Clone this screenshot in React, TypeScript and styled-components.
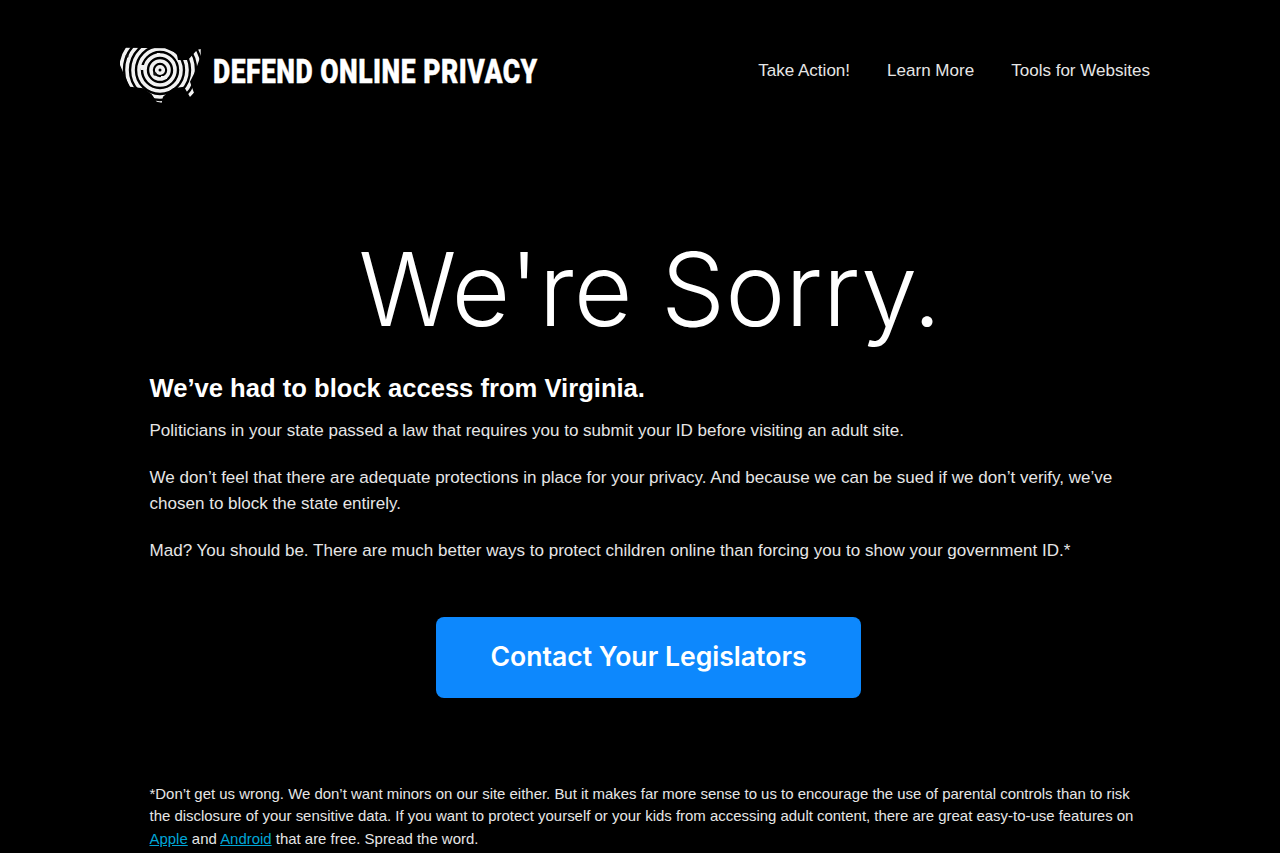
import styled, { createGlobalStyle } from 'styled-components'

const GlobalStyle = createGlobalStyle`
  html, body {
    margin: 0;
    padding: 0;
    background: #000;
    color: #fff;
    font-family: "Liberation Sans", Arial, sans-serif;
  }
`

const Page = styled.div`
  width: 1280px;
  margin: 0 auto;
`

const Header = styled.header`
  display: flex;
  align-items: center;
  justify-content: space-between;
  padding: 47px 130px 0 120px;
  height: 56px;
`

const Brand = styled.a`
  display: flex;
  align-items: center;
  gap: 9px;
  margin-top: 3px;
  color: #fff;
  text-decoration: none;
`

const BrandName = styled.span`
  display: inline-block;
  font-family: "Roboto", sans-serif;
  font-weight: 900;
  font-size: 34px;
  line-height: 36px;
  letter-spacing: 0.65px;
  white-space: nowrap;
  -webkit-text-stroke: 0.4px #fff;
  transform: scaleX(0.78);
  transform-origin: left center;
  width: 326px;
  margin-top: -11px;
`

const Nav = styled.nav`
  display: flex;
  gap: 37px;
  margin-top: -9px;
`

const NavLink = styled.a`
  color: #e6e6e6;
  font-size: 17.05px;
  line-height: 24px;
  text-decoration: none;
`

const Title = styled.h1`
  margin: 114px 0 0;
  padding-left: 20px;
  text-align: center;
  font-family: "Inter", sans-serif;
  font-weight: 300;
  font-size: 101.5px;
  line-height: 144px;
  color: #fff;
`

const Content = styled.main`
  width: 998px;
  margin: 0 0 0 149.5px;
`

const Lead = styled.h2`
  margin: 0;
  font-size: 25.6px;
  line-height: 30px;
  font-weight: 700;
  color: #fff;
  padding-top: 12px;
`

const Para = styled.p`
  margin: 0 0 21.4px;
  font-size: 17.05px;
  line-height: 25.6px;
  color: #e6e6e6;
`

const LeadPara = styled(Para)`
  margin-top: 15px;
`

const ButtonRow = styled.div`
  display: flex;
  justify-content: center;
  margin: 54px 0 84.6px;
`

const CtaButton = styled.a`
  display: flex;
  align-items: center;
  justify-content: center;
  box-sizing: border-box;
  width: 425px;
  height: 81px;
  padding-bottom: 3px;
  border-radius: 8px;
  background: #0d88fd;
  color: #fff;
  font-family: "Inter", sans-serif;
  font-weight: 600;
  font-size: 26.6px;
  text-decoration: none;
`

const Footnote = styled.p`
  margin: 0;
  font-size: 14.94px;
  line-height: 22.5px;
  color: #e6e6e6;
`

const FootLink = styled.a`
  color: #00a5d6;
  text-decoration: underline;
`

const rings = [3.3, 9, 15, 21, 27, 33, 39, 45, 51]

function Logo() {
  return (
    <svg width="84" height="60" viewBox="0 0 84 60" aria-hidden="true">
      <defs>
        <clipPath id="usa">
          <path d="M3.3 0.7 L45 1.3 L56.7 6.3 L58 13 L68 13 L77 3 L80.7 2 L80.7 8.7 L75 24.7 L70 34.7 L74 46 L70 50 L64 39.7 L53 41.3 L43 49.7 L41.7 55.7 L36.7 54.7 L31.7 47.3 L23.3 41.3 L10 39.7 L5 29.7 L0 18 L0 8 Z" />
        </clipPath>
      </defs>
      <g clipPath="url(#usa)" fill="none" stroke="#f2f2f2" strokeWidth="3.6">
        {rings.map(r => (
          <circle key={r} cx="40" cy="23" r={r} />
        ))}
      </g>
      <circle cx="7" cy="9" r="1.6" fill="#111" />
      <rect x="21" y="18" width="4" height="5" fill="#f2f2f2" />
      <circle cx="35" cy="27" r="1.8" fill="#111" />
      <rect x="41" y="29" width="6" height="3" fill="#f2f2f2" />
      <rect x="37" y="6" width="3" height="3" fill="#f2f2f2" />
    </svg>
  )
}

export default function App() {
  return (
    <Page>
      <GlobalStyle />
      <Header>
        <Brand href="#">
          <Logo />
          <BrandName>DEFEND ONLINE PRIVACY</BrandName>
        </Brand>
        <Nav>
          <NavLink href="#">Take Action!</NavLink>
          <NavLink href="#">Learn More</NavLink>
          <NavLink href="#">Tools for Websites</NavLink>
        </Nav>
      </Header>
      <Title>We're Sorry.</Title>
      <Content>
        <Lead>We’ve had to block access from Virginia.</Lead>
        <LeadPara>Politicians in your state passed a law that requires you to submit your ID before visiting an adult site.</LeadPara>
        <Para>We don’t feel that there are adequate protections in place for your privacy. And because we can be sued if we don’t verify, we’ve chosen to block the state entirely.</Para>
        <Para>Mad? You should be. There are much better ways to protect children online than forcing you to show your government ID.*</Para>
        <ButtonRow>
          <CtaButton href="#">Contact Your Legislators</CtaButton>
        </ButtonRow>
        <Footnote>
          *Don’t get us wrong. We don’t want minors on our site either. But it makes far more sense to us to encourage the use of parental controls than to risk the disclosure of your sensitive data. If you want to protect yourself or your kids from accessing adult content, there are great easy-to-use features on <FootLink href="#">Apple</FootLink> and <FootLink href="#">Android</FootLink> that are free. Spread the word.
        </Footnote>
      </Content>
    </Page>
  )
}
